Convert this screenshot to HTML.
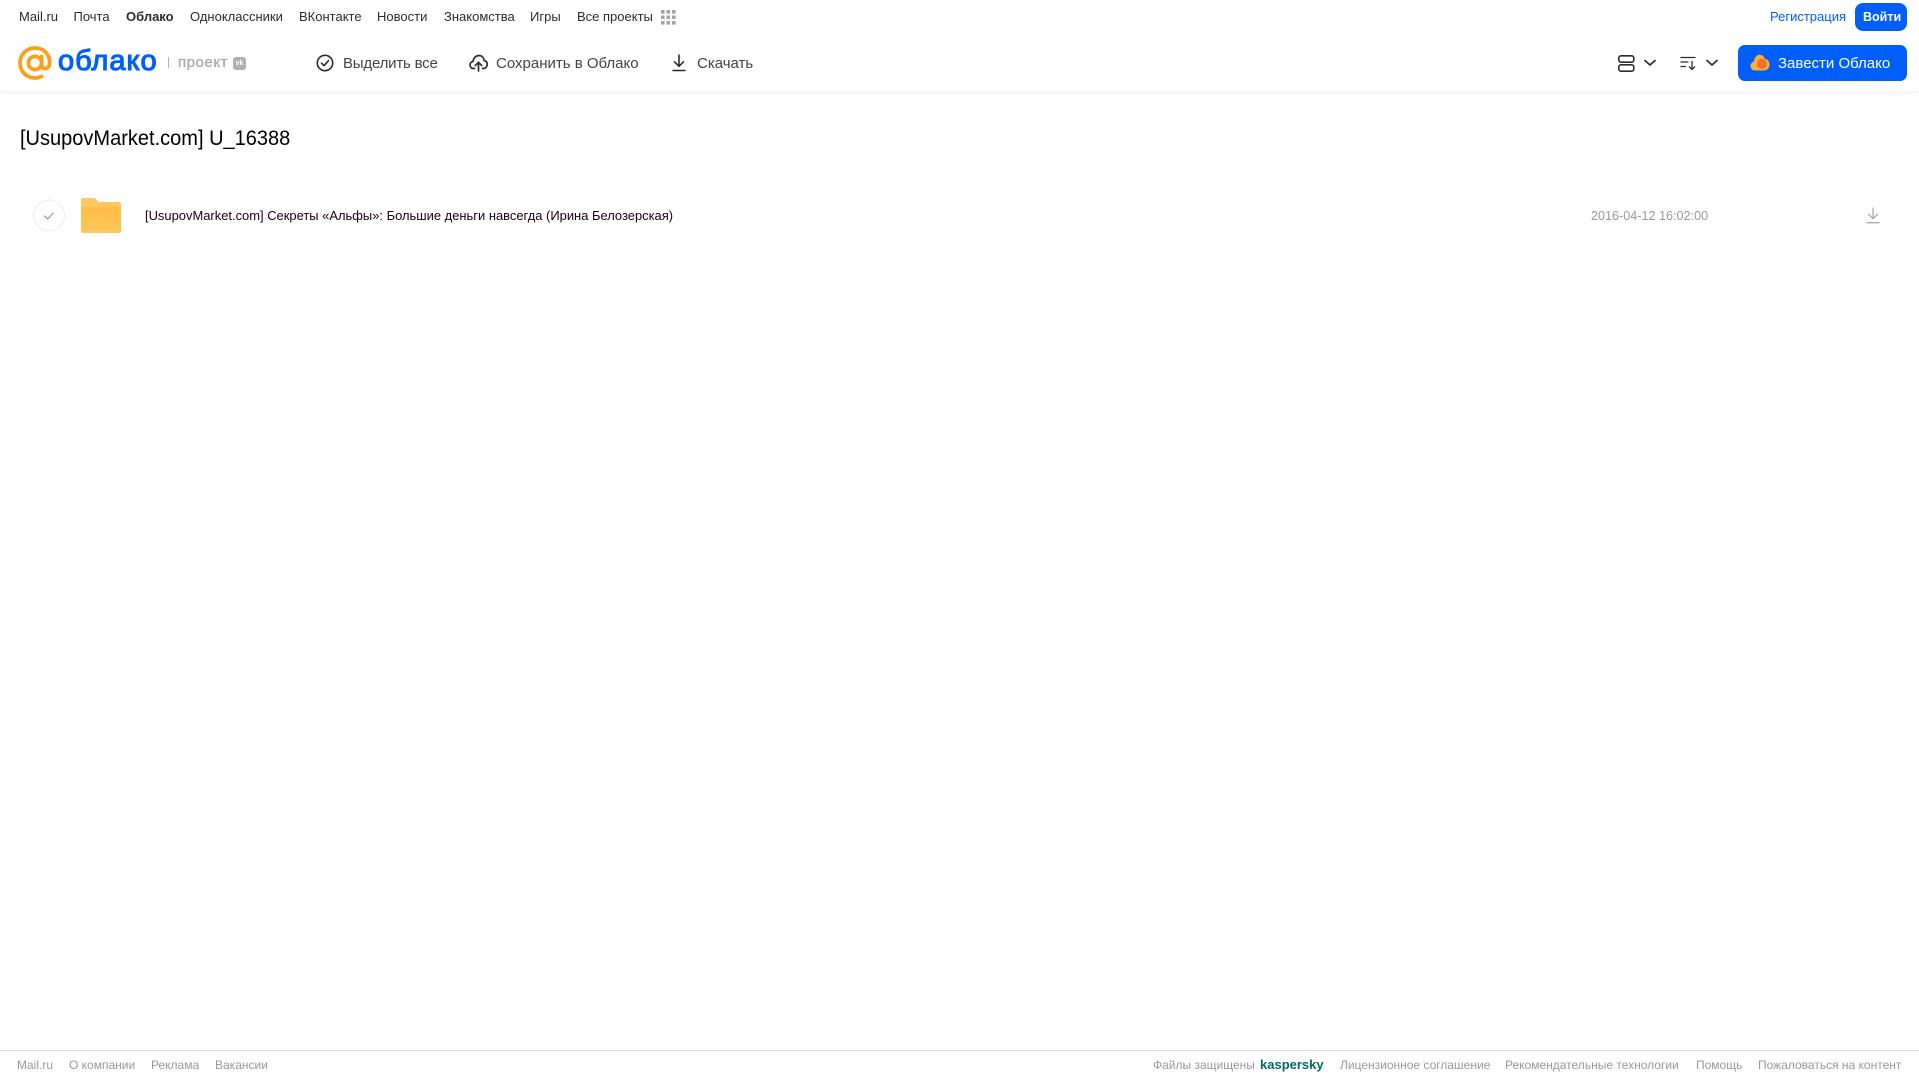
<!DOCTYPE html>
<html lang="ru"><head><meta charset="utf-8"><title>Облако</title>
<style>
html,body{margin:0;padding:0;background:#fff}
body{width:1919px;height:1079px;position:relative;overflow:hidden;font-family:"Liberation Sans",Arial,sans-serif}
.t{position:absolute;white-space:nowrap;line-height:20px;height:20px;transform-origin:0 50%}
.n{top:7px;font-size:13px;color:#2c2d2e}
.a{top:54px;font-size:15px;color:#444}
.f{top:1055px;font-size:12px;color:#999}
svg{position:absolute;display:block}
#hd{position:absolute;left:0;top:0;width:1919px;height:91px;background:#fff;box-shadow:0 1px 6px rgba(0,0,0,.07)}
</style></head><body>
<div id="hd"></div>
<span class="t n" style="left:19px">Mail.ru</span>
<span class="t n" style="left:73.5px">Почта</span>
<span class="t n" style="left:126px;font-weight:700">Облако</span>
<span class="t n" style="left:190px">Одноклассники</span>
<span class="t n" style="left:299px">ВКонтакте</span>
<span class="t n" style="left:377px">Новости</span>
<span class="t n" style="left:444px">Знакомства</span>
<span class="t n" style="left:530px">Игры</span>
<span class="t n" style="left:577px">Все проекты</span>
<svg style="left:661px;top:10px" width="15" height="15" fill="#a3a3a3"><rect x="0" y="0" width="3.6" height="3.6"/><rect x="5.5" y="0" width="3.6" height="3.6"/><rect x="11" y="0" width="3.6" height="3.6"/><rect x="0" y="5.5" width="3.6" height="3.6"/><rect x="5.5" y="5.5" width="3.6" height="3.6"/><rect x="11" y="5.5" width="3.6" height="3.6"/><rect x="0" y="11" width="3.6" height="3.6"/><rect x="5.5" y="11" width="3.6" height="3.6"/><rect x="11" y="11" width="3.6" height="3.6"/></svg>
<span class="t" style="left:1770px;top:7px;font-size:13px;color:#005ff9">Регистрация</span>
<div style="position:absolute;left:1855px;top:3px;width:52px;height:28px;background:#005ff9;border-radius:8px"></div>
<span class="t" style="left:1863px;top:7px;font-size:12.5px;font-weight:700;color:#fff">Войти</span>

<svg style="left:18px;top:46px" width="34" height="34" viewBox="0 0 34 34" fill="none" stroke="#f9a11b" stroke-width="3.8"><circle cx="17" cy="17" r="6.6"/><path d="M23.6 10.5v8.5c0 5 7.6 5 8-1.500C32 8 25.500 2 17 2 8.500 2 2 8.700 2 17s6.500 15 15 15c2.800 0 4.800-.6 6.600-1.600" stroke-linecap="round"/></svg>
<span class="t" style="left:58px;top:41px;height:40px;line-height:40px;font-size:29px;color:#005ff9;-webkit-text-stroke:1.1px #005ff9;letter-spacing:1px">облако</span>
<div style="position:absolute;left:168px;top:57px;width:1px;height:11px;background:#b5b5b5"></div>
<span class="t" style="left:178px;top:53px;font-size:15px;color:#aaa;-webkit-text-stroke:.35px #aaa;letter-spacing:.55px">проект</span>
<div style="position:absolute;left:233px;top:57px;width:13px;height:13px;background:#b0b0b0;border-radius:3px;color:#fff;font-size:7px;font-weight:700;line-height:13px;text-align:center">vk</div>

<svg style="left:316px;top:54px" width="18" height="18" viewBox="0 0 18 18" fill="none" stroke="#2c2d2e" stroke-width="1.600"><circle cx="9" cy="9" r="7.700"/><path d="M5.500 9.200l2.500 2.500 4.500-5" stroke-linecap="round" stroke-linejoin="round"/></svg>
<span class="t a" style="left:343px;letter-spacing:-.2px">Выделить все</span>
<svg style="left:469px;top:54px" width="19" height="18" viewBox="0 0 19 18" fill="none" stroke="#2c2d2e" stroke-width="1.700" stroke-linecap="round" stroke-linejoin="round"><path d="M5.500 14.500H4.500C2.500 14.500 1 13 1 11c0-1.800 1.200-3.200 3-3.500C4.500 4 7 1.500 9.800 1.500c2.800 0 5 2 5.400 5 2 .4 3 2 3 3.800 0 2.300-1.600 4.200-4 4.200h-.7"/><path d="M9.500 17V9M6.300 11.500l3.200-3.200 3.200 3.200"/></svg>
<span class="t a" style="left:496px">Сохранить в Облако</span>
<svg style="left:671px;top:54px" width="16" height="18" viewBox="0 0 16 18" fill="none" stroke="#2c2d2e" stroke-width="1.600" stroke-linecap="round" stroke-linejoin="round"><path d="M8 1v11M3.500 7.800L8 12.300l4.500-4.500M2 16.500h12"/></svg>
<span class="t a" style="left:697px">Скачать</span>

<svg style="left:1618px;top:55px" width="17" height="17" viewBox="0 0 17 17" fill="none" stroke="#2c2d2e" stroke-width="1.600"><rect x=".8" y=".8" width="15" height="6.400" rx="2.200"/><rect x=".8" y="9.800" width="15" height="6.400" rx="2.200"/></svg>
<svg style="left:1644px;top:59px" width="12" height="8" viewBox="0 0 12 8" fill="none" stroke="#2c2d2e" stroke-width="1.700" stroke-linecap="round" stroke-linejoin="round"><path d="M1 1.500l5 4.500 5-4.500"/></svg>
<svg style="left:1680px;top:56px" width="17" height="15" viewBox="0 0 17 15" fill="none" stroke="#2c2d2e" stroke-width="1.300" stroke-linecap="round" stroke-linejoin="round"><path d="M1 1.500h14M1 6h7M1 10.500h4.500M12 5.500v8M9.300 10.800l2.700 2.700 2.700-2.700"/></svg>
<svg style="left:1706px;top:59px" width="12" height="8" viewBox="0 0 12 8" fill="none" stroke="#2c2d2e" stroke-width="1.700" stroke-linecap="round" stroke-linejoin="round"><path d="M1 1.500l5 4.500 5-4.500"/></svg>
<div style="position:absolute;left:1738px;top:45px;width:169px;height:36px;background:#005ff9;border-radius:7px"></div>
<svg style="left:1750px;top:54px" width="20" height="17" viewBox="0 0 20 17"><path d="M5 16.500C2.200 16.500 .5 14.500.5 12c0-2.300 1.500-4 3.500-4.500C4.500 3.500 6.500 .8 9.500.8c2.500 0 4.500 1.600 5.200 4 2.700.3 4.800 2.700 4.800 5.700 0 3.400-2.500 6-5.500 6z" fill="#fbb03b"/><circle cx="12" cy="10" r="5" fill="#f4702a"/></svg>
<span class="t" style="left:1778px;top:54px;font-size:15px;color:#fff">Завести Облако</span>

<span class="t" style="left:20px;top:126px;height:26px;line-height:26px;font-size:21px;color:#000;transform:scaleX(.953)">[UsupovMarket.com] U_16388</span>

<svg style="left:33px;top:199px" width="32" height="33" viewBox="0 0 32 33" fill="none"><circle cx="16" cy="16.500" r="15.500" fill="#fff" stroke="#ececec"/><path d="M11.500 17l3.200 3 5.500-6" stroke="#999" stroke-width="1.200" stroke-linecap="round" stroke-linejoin="round"/></svg>
<svg style="left:81px;top:197px" width="40" height="36" viewBox="0 0 40 36"><defs><linearGradient id="g" x1="0" y1="0" x2="0" y2="1"><stop offset="0" stop-color="#ffbe45"/><stop offset="1" stop-color="#ffc65c"/></linearGradient></defs><path d="M2 1h10c2 0 3 .8 4.200 2.500L17.500 5H38c1.100 0 2 .9 2 2v27c0 1.100-.9 2-2 2H2c-1.100 0-2-.9-2-2V3c0-1.100.9-2 2-2z" fill="#ffc864"/><path d="M0 10h40v24c0 1.100-.9 2-2 2H2c-1.100 0-2-.9-2-2z" fill="url(#g)"/></svg>
<span class="t" style="left:145px;top:206px;font-size:13px;color:#1a0015;transform:scaleX(.995)">[UsupovMarket.com] Секреты «Альфы»: Большие деньги навсегда (Ирина Белозерская)</span>
<span class="t" style="left:1591px;top:206px;font-size:13px;color:#999;transform:scaleX(.97)">2016-04-12 16:02:00</span>
<svg style="left:1866px;top:207px" width="14" height="17" viewBox="0 0 14 17" fill="none" stroke="#aaa" stroke-width="1.300" stroke-linecap="round" stroke-linejoin="round"><path d="M7 1v10.500M2.500 7.200L7 11.700l4.500-4.500M1 15.700h12"/></svg>

<div style="position:absolute;left:0;top:1050px;width:1919px;height:1px;background:#d9d9d9"></div>
<span class="t f" style="left:17px">Mail.ru</span>
<span class="t f" style="left:69px">О компании</span>
<span class="t f" style="left:151px">Реклама</span>
<span class="t f" style="left:215px">Вакансии</span>
<span class="t f" style="left:1153px">Файлы защищены</span>
<span class="t" style="left:1260px;top:1055px;font-size:13px;font-weight:700;color:#006d5c">kaspersky</span>
<span class="t f" style="left:1340px">Лицензионное соглашение</span>
<span class="t f" style="left:1505px">Рекомендательные технологии</span>
<span class="t f" style="left:1696px">Помощь</span>
<span class="t f" style="left:1758px">Пожаловаться на контент</span>
</body></html>
